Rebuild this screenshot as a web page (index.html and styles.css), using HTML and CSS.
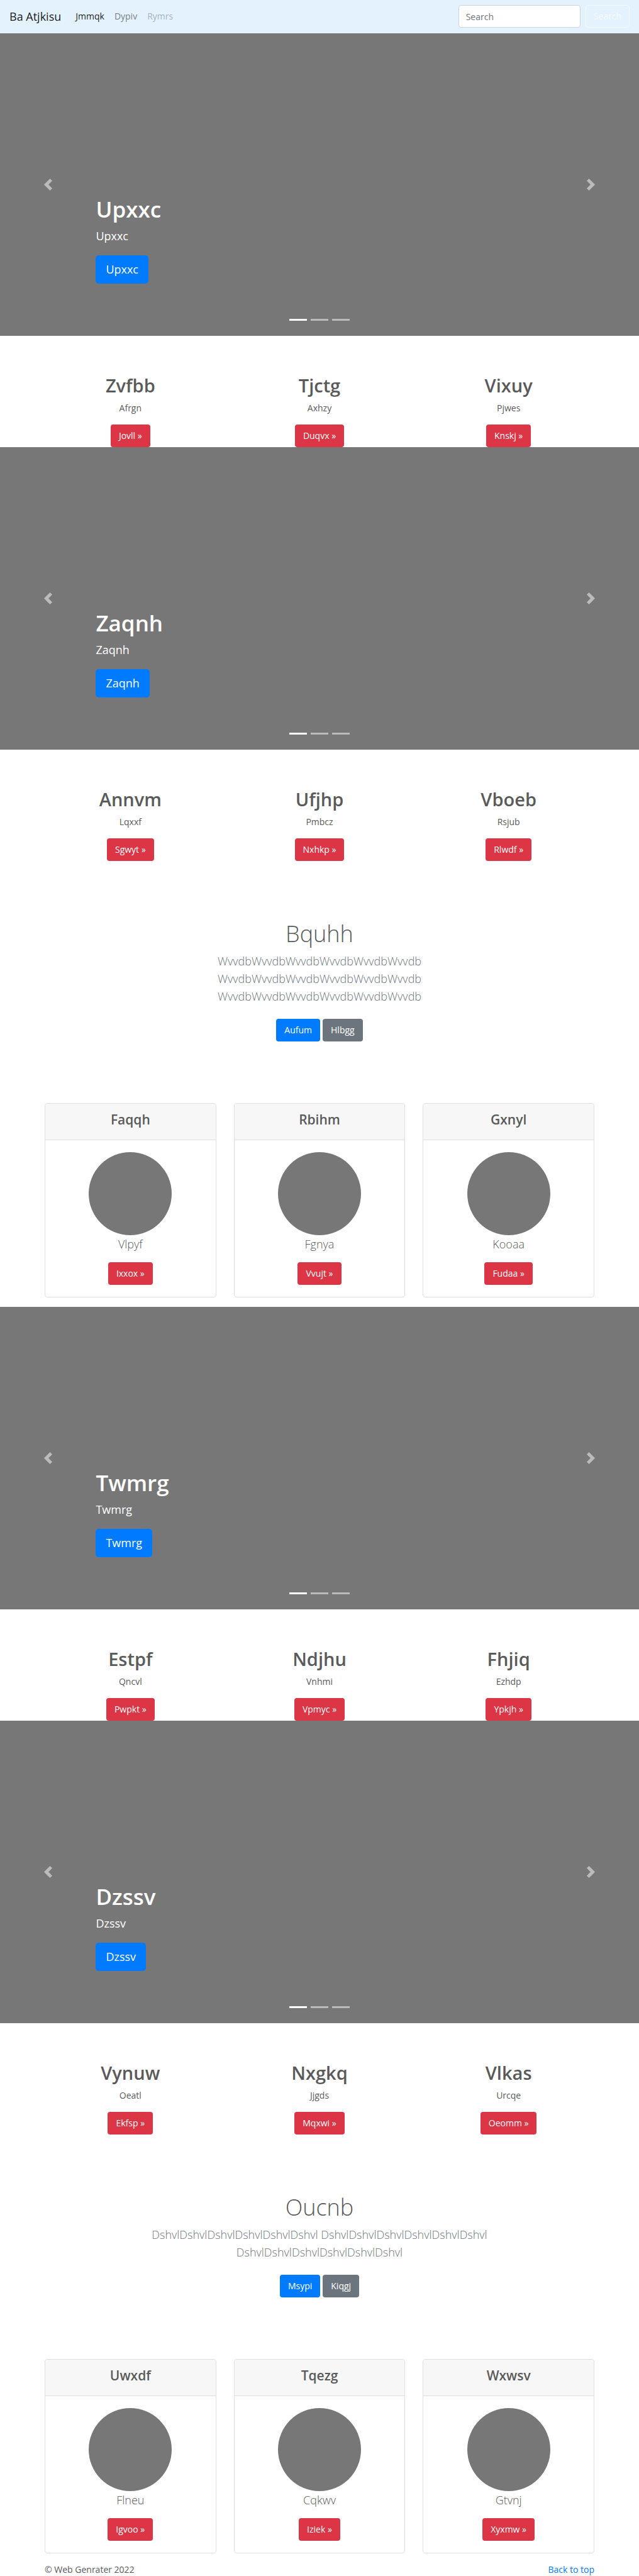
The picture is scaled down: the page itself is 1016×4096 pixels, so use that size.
FILE: index.html
```html
<!DOCTYPE html>
<html lang="en">
<head>
<meta charset="utf-8">
<meta name="viewport" content="width=device-width, initial-scale=1">
<title>Ba Atjkisu</title>
<link rel="stylesheet" href="styles.css">
</head>
<body>
<svg class="sprite" aria-hidden="true">
  <symbol id="prev" viewBox="0 0 8 8"><path d="M5.25 0l-4 4 4 4 1.5-1.5L4.25 4l2.5-2.5L5.25 0z"/></symbol>
  <symbol id="next" viewBox="0 0 8 8"><path d="M2.75 0l-1.5 1.5L3.75 4l-2.5 2.5L2.75 8l4-4-4-4z"/></symbol>
</svg>

<header class="navbar" id="top">
  <a class="brand" href="#top">Ba Atjkisu</a>
  <nav class="links">
    <a class="link active" href="#">Jmmqk</a>
    <a class="link" href="#">Dypiv</a>
    <a class="link disabled" href="#">Rymrs</a>
  </nav>
  <form class="search">
    <input class="search-input" type="search" placeholder="Search" aria-label="Search">
    <button class="btn btn-outline" type="button">Search</button>
  </form>
</header>

<main>
  <section class="carousel">
    <div class="caption">
      <h1 class="caption-title">Upxxc</h1>
      <p class="caption-text">Upxxc</p>
      <a class="btn btn-primary btn-lg" href="#">Upxxc</a>
    </div>
    <button class="control control-prev" type="button" aria-label="Previous"><svg class="arrow"><use href="#prev"/></svg></button>
    <button class="control control-next" type="button" aria-label="Next"><svg class="arrow"><use href="#next"/></svg></button>
    <ol class="indicators"><li class="current"></li><li></li><li></li></ol>
  </section>

  <section class="container columns features">
    <div class="feature"><h2 class="feature-title">Zvfbb</h2><p class="feature-text">Afrgn</p><a class="btn btn-danger" href="#">Jovll »</a></div>
    <div class="feature"><h2 class="feature-title">Tjctg</h2><p class="feature-text">Axhzy</p><a class="btn btn-danger" href="#">Duqvx »</a></div>
    <div class="feature"><h2 class="feature-title">Vixuy</h2><p class="feature-text">Pjwes</p><a class="btn btn-danger" href="#">Knskj »</a></div>
  </section>

  <section class="carousel">
    <div class="caption">
      <h1 class="caption-title">Zaqnh</h1>
      <p class="caption-text">Zaqnh</p>
      <a class="btn btn-primary btn-lg" href="#">Zaqnh</a>
    </div>
    <button class="control control-prev" type="button" aria-label="Previous"><svg class="arrow"><use href="#prev"/></svg></button>
    <button class="control control-next" type="button" aria-label="Next"><svg class="arrow"><use href="#next"/></svg></button>
    <ol class="indicators"><li class="current"></li><li></li><li></li></ol>
  </section>

  <section class="container columns features">
    <div class="feature"><h2 class="feature-title">Annvm</h2><p class="feature-text">Lqxxf</p><a class="btn btn-danger" href="#">Sgwyt »</a></div>
    <div class="feature"><h2 class="feature-title">Ufjhp</h2><p class="feature-text">Pmbcz</p><a class="btn btn-danger" href="#">Nxhkp »</a></div>
    <div class="feature"><h2 class="feature-title">Vboeb</h2><p class="feature-text">Rsjub</p><a class="btn btn-danger" href="#">Rlwdf »</a></div>
  </section>

  <section class="hero">
    <h1 class="hero-title">Bquhh</h1>
    <p class="hero-text">WvvdbWvvdbWvvdbWvvdbWvvdbWvvdb WvvdbWvvdbWvvdbWvvdbWvvdbWvvdb WvvdbWvvdbWvvdbWvvdbWvvdbWvvdb</p>
    <div class="actions"><a class="btn btn-primary" href="#">Aufum</a><a class="btn btn-secondary" href="#">Hlbgg</a></div>
  </section>

  <section class="container columns cards">
    <article class="card">
      <h4 class="card-title">Faqqh</h4>
      <div class="card-body"><div class="avatar"></div><p class="card-text">Vlpyf</p><a class="btn btn-danger" href="#">Ixxox »</a></div>
    </article>
    <article class="card">
      <h4 class="card-title">Rbihm</h4>
      <div class="card-body"><div class="avatar"></div><p class="card-text">Fgnya</p><a class="btn btn-danger" href="#">Vvujt »</a></div>
    </article>
    <article class="card">
      <h4 class="card-title">Gxnyl</h4>
      <div class="card-body"><div class="avatar"></div><p class="card-text">Kooaa</p><a class="btn btn-danger" href="#">Fudaa »</a></div>
    </article>
  </section>

  <section class="carousel">
    <div class="caption">
      <h1 class="caption-title">Twmrg</h1>
      <p class="caption-text">Twmrg</p>
      <a class="btn btn-primary btn-lg" href="#">Twmrg</a>
    </div>
    <button class="control control-prev" type="button" aria-label="Previous"><svg class="arrow"><use href="#prev"/></svg></button>
    <button class="control control-next" type="button" aria-label="Next"><svg class="arrow"><use href="#next"/></svg></button>
    <ol class="indicators"><li class="current"></li><li></li><li></li></ol>
  </section>

  <section class="container columns features">
    <div class="feature"><h2 class="feature-title">Estpf</h2><p class="feature-text">Qncvl</p><a class="btn btn-danger" href="#">Pwpkt »</a></div>
    <div class="feature"><h2 class="feature-title">Ndjhu</h2><p class="feature-text">Vnhmi</p><a class="btn btn-danger" href="#">Vpmyc »</a></div>
    <div class="feature"><h2 class="feature-title">Fhjiq</h2><p class="feature-text">Ezhdp</p><a class="btn btn-danger" href="#">Ypkjh »</a></div>
  </section>

  <section class="carousel">
    <div class="caption">
      <h1 class="caption-title">Dzssv</h1>
      <p class="caption-text">Dzssv</p>
      <a class="btn btn-primary btn-lg" href="#">Dzssv</a>
    </div>
    <button class="control control-prev" type="button" aria-label="Previous"><svg class="arrow"><use href="#prev"/></svg></button>
    <button class="control control-next" type="button" aria-label="Next"><svg class="arrow"><use href="#next"/></svg></button>
    <ol class="indicators"><li class="current"></li><li></li><li></li></ol>
  </section>

  <section class="container columns features">
    <div class="feature"><h2 class="feature-title">Vynuw</h2><p class="feature-text">Oeatl</p><a class="btn btn-danger" href="#">Ekfsp »</a></div>
    <div class="feature"><h2 class="feature-title">Nxgkq</h2><p class="feature-text">Jjgds</p><a class="btn btn-danger" href="#">Mqxwi »</a></div>
    <div class="feature"><h2 class="feature-title">Vlkas</h2><p class="feature-text">Urcqe</p><a class="btn btn-danger" href="#">Oeomm »</a></div>
  </section>

  <section class="hero">
    <h1 class="hero-title">Oucnb</h1>
    <p class="hero-text">DshvlDshvlDshvlDshvlDshvlDshvl DshvlDshvlDshvlDshvlDshvlDshvl DshvlDshvlDshvlDshvlDshvlDshvl</p>
    <div class="actions"><a class="btn btn-primary" href="#">Msypi</a><a class="btn btn-secondary" href="#">Kiqgj</a></div>
  </section>

  <section class="container columns cards">
    <article class="card">
      <h4 class="card-title">Uwxdf</h4>
      <div class="card-body"><div class="avatar"></div><p class="card-text">Flneu</p><a class="btn btn-danger" href="#">Igvoo »</a></div>
    </article>
    <article class="card">
      <h4 class="card-title">Tqezg</h4>
      <div class="card-body"><div class="avatar"></div><p class="card-text">Cqkwv</p><a class="btn btn-danger" href="#">Iziek »</a></div>
    </article>
    <article class="card">
      <h4 class="card-title">Wxwsv</h4>
      <div class="card-body"><div class="avatar"></div><p class="card-text">Gtvnj</p><a class="btn btn-danger" href="#">Xyxmw »</a></div>
    </article>
  </section>
</main>

<footer class="container footer">
  <span>© Web Genrater 2022</span>
  <a class="to-top" href="#top">Back to top</a>
</footer>
</body>
</html>
```
FILE: styles.css
```css
* { box-sizing: border-box; }

body {
  margin: 0;
  background: #fff;
  color: #5a5a5a;
  font-family: "Open Sans", "Noto Sans", sans-serif;
  font-size: 14px;
  line-height: 22px;
}

h1, h2, h4, p, ol { margin: 0; padding: 0; }
a { text-decoration: none; }
.sprite { display: none; }

.container {
  width: 100%;
  max-width: 902px;
  margin: 0 auto;
  padding: 0 14px;
}

.columns {
  display: grid;
  grid-template-columns: repeat(3, 1fr);
  gap: 28px;
}

/* Buttons */
.btn {
  display: inline-block;
  padding: 6px 12px;
  border: 1px solid transparent;
  border-radius: 4px;
  color: #fff;
  font: inherit;
  text-align: center;
}
.btn-lg { padding: 8px 15px; border-radius: 5px; font-size: 18px; line-height: 27px; }
.btn-primary { background: #007bff; }
.btn-secondary { background: #6c757d; }
.btn-danger { background: #dc3545; }
.btn-outline { background: transparent; border-color: #f8f9fa; color: #f8f9fa; }

/* Navbar */
.navbar {
  display: flex;
  align-items: center;
  padding: 8px 15px 9px;
  background: #e3f2fd;
}
.brand { margin-right: 15px; color: rgba(0, 0, 0, .9); font-size: 18px; line-height: 28px; }
.links { display: flex; flex: 1; }
.link { padding: 0 8px; color: rgba(0, 0, 0, .5); }
.link.active { color: rgba(0, 0, 0, .9); }
.link.disabled { color: rgba(0, 0, 0, .3); }
.search { display: flex; gap: 8px; }
.search-input {
  width: 194px;
  height: 36px;
  padding: 6px 11px;
  border: 1px solid #ced4da;
  border-radius: 4px;
  background: #fff;
  color: #495057;
  font: inherit;
  appearance: none;
}
.search-input::placeholder { color: #6c757d; opacity: 1; }

/* Carousel */
.carousel {
  position: relative;
  display: flex;
  align-items: flex-end;
  min-height: 481px;
  padding: 0 15% 83px;
  background: #777;
  color: #fff;
}
.caption-title { margin-bottom: 6px; font-size: 35px; font-weight: 600; line-height: 45px; }
.caption-text { margin-bottom: 17px; font-size: 18px; line-height: 28px; }
.control {
  position: absolute;
  top: 0;
  bottom: 0;
  display: flex;
  align-items: center;
  justify-content: center;
  width: 15%;
  padding: 0;
  border: 0;
  background: none;
  opacity: .5;
}
.control-prev { left: 0; }
.control-next { right: 0; }
.arrow { width: 19px; height: 19px; fill: #fff; }
.indicators {
  position: absolute;
  right: 0;
  bottom: 24px;
  left: 0;
  display: flex;
  justify-content: center;
  gap: 6px;
  list-style: none;
}
.indicators li { width: 28px; height: 3px; background: #fff; opacity: .5; }
.indicators .current { opacity: 1; }

/* Features */
.features { padding-top: 61px; }
.feature { text-align: center; }
.feature .btn, .card .btn { display: block; width: fit-content; margin: 0 auto; }
.feature-title { margin-bottom: 7px; font-size: 29px; font-weight: 600; line-height: 36px; }
.feature-text { margin-bottom: 15px; }

/* Hero */
.hero {
  max-width: 600px;
  margin: 0 auto;
  padding: 93px 0 98px;
  text-align: center;
}
.hero-title { margin-bottom: 7px; font-size: 36px; font-weight: 300; line-height: 45px; }
.hero-text { margin-bottom: 22px; color: #6c757d; font-size: 18px; font-weight: 300; line-height: 28px; }
.actions { display: flex; justify-content: center; gap: 4px; }

/* Cards */
.cards { margin-bottom: 15px; }
.card { border: 1px solid #dfdfdf; border-radius: 4px; text-align: center; overflow: hidden; }
.card-title {
  padding: 11px 19px 18px;
  border-bottom: 1px solid #dfdfdf;
  background: #f7f7f7;
  font-size: 21px;
  font-weight: 600;
  line-height: 28px;
}
.card-body { padding: 19px; }
.avatar { width: 132px; height: 132px; margin: 0 auto; border-radius: 50%; background: #777; }
.card-text { margin-bottom: 15px; font-size: 18px; font-weight: 300; line-height: 28px; }

/* Footer */
.footer { display: flex; justify-content: space-between; }
.to-top { color: #007bff; }
```
